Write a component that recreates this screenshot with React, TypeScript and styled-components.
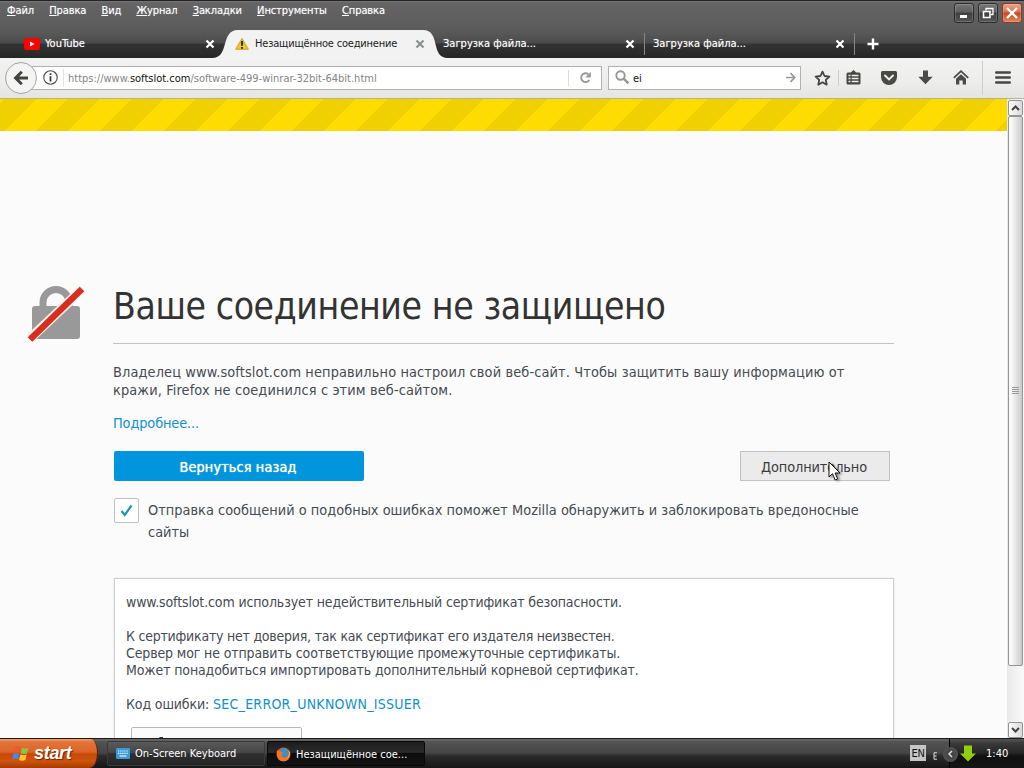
import styled, { createGlobalStyle } from 'styled-components';

const GlobalStyle = createGlobalStyle`
  * {
    box-sizing: border-box;
  }

  body {
    margin: 0;
    overflow: hidden;
    font-family: 'DejaVu Sans Condensed', 'DejaVu Sans', sans-serif;
    font-stretch: condensed;
  }

  svg {
    display: block;
    flex: none;
  }
`;

const Desktop = styled.div`
  position: relative;
  display: flex;
  flex-direction: column;
  width: 1024px;
  height: 768px;
  overflow: hidden;
  background: #fbfbfb;
`;

/* Title area */

const Chrome = styled.header`
  display: flex;
  flex-direction: column;
  height: 58px;
  flex: none;
  color: #fff;
  font-size: 11px;
  border-top: 1px solid #242225;
  background: linear-gradient(
    #777 0,
    #646464 2px,
    #5d5d5d 24px,
    #585858 32px,
    #4b4b4b 42px,
    #343434 43px,
    #262626 57px
  );
`;

const MenuRow = styled.div`
  display: flex;
  justify-content: space-between;
  height: 29px;
`;

const Menu = styled.nav`
  display: flex;
  gap: 15.2px;
  padding: 3px 0 0 7px;
`;

const MenuItem = styled.span`
  height: 14px;
  line-height: 14px;
  letter-spacing: -0.1px;
  text-shadow: 0 0 1px rgba(255, 255, 255, 0.5);

  &::first-letter {
    text-decoration: underline;
  }
`;

const WindowButtons = styled.div`
  display: flex;
  gap: 4px;
  padding: 2px 2px 0 0;
`;

const WindowButton = styled.button<{ $close?: boolean }>`
  display: flex;
  align-items: center;
  justify-content: center;
  width: 20px;
  height: 20px;
  padding: 0;
  border: 1px solid ${(p) => (p.$close ? '#8e3a22' : '#2c2c2c')};
  border-radius: 3px;
  background: ${(p) =>
    p.$close
      ? 'linear-gradient(#eda28a, #d9714e 45%, #c8481f 50%, #e08a5e)'
      : 'linear-gradient(#777, #5e5e5e 45%, #3f3f3f 50%, #565656)'};
  box-shadow: inset 0 0 0 1px rgba(255, 255, 255, 0.16);
`;

const TabStrip = styled.div`
  display: flex;
  height: 28px;
`;

const Tab = styled.div<{ $width: number; $left: number; $active?: boolean }>`
  position: relative;
  display: flex;
  align-items: center;
  width: ${(p) => p.$width}px;
  padding: 0 9px 0 ${(p) => p.$left}px;
  color: ${(p) => (p.$active ? '#1c1c1c' : '#fff')};
  text-shadow: ${(p) => (p.$active ? 'none' : '0 0 1px rgba(255,255,255,.5)')};
`;

const TabShape = styled.svg`
  position: absolute;
  left: -12px;
  top: 0;
`;

const TabTitle = styled.span<{ $spacing?: number }>`
  position: relative;
  flex: 1;
  line-height: 14px;
  white-space: nowrap;
  letter-spacing: ${(p) => p.$spacing ?? 0}px;
`;

const TabIcon = styled.span`
  position: relative;
  width: 16px;
  margin-right: 5px;
`;

const TabClose = styled.span`
  position: relative;
`;

const TabDivider = styled.i`
  width: 1px;
  height: 22px;
  margin-top: 3px;
  background: #868686;
`;

const NewTab = styled.div`
  display: flex;
  align-items: center;
  padding-left: 12px;
`;

/* Navigation toolbar */

const Toolbar = styled.div`
  display: flex;
  align-items: center;
  height: 41px;
  flex: none;
  padding: 0 0 1px 5px;
  border-bottom: 1px solid #b5b19a;
  background: linear-gradient(#f2f2f2, #ededec 60%, #e4e4e3);
`;

const BackButton = styled.button`
  position: relative;
  z-index: 1;
  display: flex;
  align-items: center;
  justify-content: center;
  width: 32px;
  height: 32px;
  padding: 0;
  border: 1px solid #a5a5a5;
  border-radius: 50%;
  background: #f4f4f4;
`;

const Field = styled.div<{ $width: number }>`
  display: flex;
  align-items: center;
  width: ${(p) => p.$width}px;
  height: 24px;
  border: 1px solid #b2b2b2;
  background: #fff;
  font-size: 11px;
`;

const AddressField = styled(Field)`
  margin: 0 6px 0 -6px;
  padding-left: 11px;
`;

const SearchField = styled(Field)`
  padding: 0 4px 0 6px;
  color: #111;
`;

const FieldDivider = styled.i`
  width: 1px;
  height: 18px;
  margin: 0 4px 0 5px;
  background: #e2e2e2;
`;

const Url = styled.span`
  flex: 1;
  padding-top: 2px;
  color: #858585;
  white-space: nowrap;

  b {
    color: #111;
    font-weight: normal;
  }
`;

const ReloadSlot = styled.div`
  display: flex;
  align-items: center;
  justify-content: center;
  width: 33px;
  height: 16px;
  border-left: 1px solid #dcdcdc;
`;

const Query = styled.span`
  flex: 1;
  padding: 2px 0 0 3px;
`;

const Tools = styled.div`
  display: flex;
  align-items: center;
  gap: 20.5px;
  padding-left: 12.5px;
`;

const ToolDivider = styled.i<{ $height: number; $pull: number }>`
  width: 1px;
  height: ${(p) => p.$height}px;
  margin: 0 -${(p) => p.$pull}px;
  background: #cdcdcd;
`;

/* Page */

const Viewport = styled.div`
  display: flex;
  flex: 1;
  min-height: 0;
`;

const Page = styled.main`
  flex: 1;
  height: 100%;
  overflow: hidden;
  background: #fbfbfb;
`;

const Stripes = styled.div`
  height: 32px;
  background: repeating-linear-gradient(
    135deg,
    #ffdc00 0,
    #ffdc00 2.83px,
    #f0d000 2.83px,
    #f0d000 25.46px,
    #ffdc00 25.46px,
    #ffdc00 45.25px
  );
`;

const ErrorLayout = styled.div`
  display: flex;
  padding: 153px 0 0 27px;
`;

const LockSlot = styled.div`
  width: 86px;
`;

const ErrorBody = styled.div`
  width: 781px;
  color: #464b52;
  font-size: 14.4px;
`;

const Title = styled.h1`
  height: 60px;
  margin: 0 0 19px;
  padding-top: 1px;
  border-bottom: 1px solid #c1c1c1;
  color: #333;
  font-size: 37px;
  font-weight: normal;
  line-height: 44px;
  letter-spacing: -0.4px;
  white-space: nowrap;
`;

const Text = styled.p`
  margin: 0 0 15px;
  line-height: 18px;
  letter-spacing: 0.13px;
  white-space: nowrap;
`;

const Link = styled.a`
  color: #0f91cf;
`;

const MoreLink = styled(Link)`
  display: block;
  line-height: 18px;
  letter-spacing: -0.12px;
`;

const Actions = styled.div`
  display: flex;
  justify-content: space-between;
  margin: 19px 4px 17px 1px;
`;

const PrimaryButton = styled.button`
  width: 250px;
  height: 30px;
  padding: 2px 2px 0 0;
  border: 0;
  border-radius: 2px;
  background: #0095dd;
  color: #fff;
  font: inherit;
  letter-spacing: 0.1px;
  text-shadow: 0 0 1px #fff;
`;

const SecondaryButton = styled.button`
  width: 150px;
  height: 30px;
  padding: 2px 2px 0 0;
  border: 1px solid #c1c1c1;
  background: #ebebeb;
  color: #3c3c3c;
  font: inherit;
  letter-spacing: -0.1px;
`;

const ReportRow = styled.label`
  display: flex;
  margin-left: 1px;
`;

const CheckBox = styled.span`
  display: flex;
  align-items: center;
  justify-content: center;
  width: 25px;
  height: 25px;
  margin-right: 9px;
  border: 1px solid #c1c1c1;
  border-radius: 2px;
  background: #fff;
`;

const ReportText = styled.span`
  padding-top: 1px;
  line-height: 22px;
  letter-spacing: 0.02px;
  white-space: nowrap;
`;

const Details = styled.section`
  height: 230px;
  margin: 35px 0 0 1px;
  padding: 15px 11px;
  border: 1px solid #cfcfcf;
  background: #fff;
  box-shadow: 0 0 2px rgba(0, 0, 0, 0.1);
  font-size: 14px;
  line-height: 17px;
  letter-spacing: -0.13px;
`;

const DetailsText = styled.p`
  margin: 0 0 17px;
  white-space: nowrap;
`;

const TightLine = styled.span`
  letter-spacing: -0.23px;
`;

const CodeLink = styled(Link)`
  letter-spacing: 0.27px;
`;

const ExceptionButton = styled.button`
  display: flex;
  width: 171px;
  height: 32px;
  margin: -3px 0 0 5px;
  padding: 9px 0 0 26px;
  border: 1px solid #b9b9b9;
  border-radius: 2px;
  background: #fbfbfb;
`;

/* Scroll bar */

const ScrollTrack = styled.div`
  display: flex;
  flex-direction: column;
  width: 17px;
  padding: 1px 0 0 1px;
  background: linear-gradient(90deg, #e9e9e9, #fafafa);
`;

const ScrollButton = styled.div`
  display: flex;
  align-items: center;
  justify-content: center;
  width: 15px;
  height: 16px;
  border: 1px solid #949494;
  border-radius: 2px;
  background: linear-gradient(90deg, #fbfbfb, #dadada);
`;

const ScrollThumb = styled.div`
  display: flex;
  align-items: center;
  justify-content: center;
  width: 15px;
  height: 550px;
  margin-bottom: auto;
  border: 1px solid #949494;
  border-radius: 2px;
  background: linear-gradient(90deg, #f8f8f8 20%, #e9e9e9 45%, #cbcbcb);
`;

/* Taskbar */

const Taskbar = styled.footer`
  display: flex;
  height: 30px;
  flex: none;
  border-top: 1px solid #1a1a1a;
  background: linear-gradient(#6c6c6c, #525252 3px, #454545 14px, #2b2b2b 17px, #161616);
  color: #fff;
  font-size: 11px;
`;

const StartButton = styled.div`
  display: flex;
  align-items: center;
  width: 98px;
  padding: 0 0 1px 11px;
  border-right: 1px solid #5b2307;
  border-radius: 0 7px 9px 0 / 0 14px 14px 0;
  background: linear-gradient(#f3a06c, #e4733a 3px, #dd6428 13px, #c64806 15px, #cf540c 22px, #a53a04);
  font: italic bold 18px/20px 'Liberation Sans', Arial, sans-serif;
  letter-spacing: -0.3px;
  text-shadow: 1px 1px 1px rgba(60, 20, 0, 0.7);
`;

const StartLabel = styled.span`
  padding-left: 4px;
`;

const TaskButton = styled.div<{ $active?: boolean }>`
  display: flex;
  align-items: center;
  gap: 5px;
  width: 158px;
  height: 25px;
  margin: 2px 0 0 ${(p) => (p.$active ? 2 : 9)}px;
  padding: ${(p) => (p.$active ? '2px 0 0 8px' : '0 0 0 8px')};
  border: 1px solid ${(p) => (p.$active ? '#090909' : '#3a3a3a')};
  border-radius: 2px;
  background: ${(p) =>
    p.$active
      ? 'linear-gradient(#1d1d1d, #2b2b2b 45%, #0c0c0c 50%, #131313)'
      : 'linear-gradient(#5a5a5a, #464646 45%, #2f2f2f 52%, #252525)'};
  white-space: nowrap;
`;

const Language = styled.div`
  width: 16px;
  height: 16px;
  margin: 6px 0 0 auto;
  background: #c6c6c6;
  color: #111;
  line-height: 17px;
  text-align: center;
  letter-spacing: -0.4px;
`;

const LanguageGrip = styled.div`
  display: flex;
  align-items: center;
  width: 23px;
  padding: 4px 0 0 7px;
`;

const Tray = styled.div`
  display: flex;
  align-items: center;
  width: 75px;
  padding-left: 10px;
  border-left: 1px solid #000;
  background: linear-gradient(#555, #3a3a3a 4px, #262626 14px, #101010 17px, #151515);
`;

const TrayToggle = styled.div`
  display: flex;
  align-items: center;
  justify-content: center;
  width: 15px;
  height: 15px;
  margin: 1px 2px 0 -17px;
  border-radius: 50%;
  background: radial-gradient(#3b3b3b, #5c5c5c);
`;

const Clock = styled.span`
  padding-left: 10px;
`;

const Pointer = styled.svg`
  position: absolute;
  left: 828px;
  top: 461px;
  filter: drop-shadow(2px 1px 1px rgba(0, 0, 0, 0.4));
`;

const CloseIcon = ({ color }: { color: string }) => (
  <svg width="10" height="10" viewBox="0 0 10 10">
    <path d="M1.5 1.5l7 7M8.5 1.5l-7 7" stroke={color} strokeWidth="2.2" />
  </svg>
);

const YoutubeIcon = () => (
  <svg width="16" height="12" viewBox="0 0 16 12">
    <rect width="16" height="12" rx="2.5" fill="#f00" />
    <path d="M6 3.4v5.2L10.6 6z" fill="#fff" />
  </svg>
);

const WarningIcon = () => (
  <svg width="16" height="14" viewBox="0 0 16 14">
    <path d="M8 1.8L14 12.2H2z" fill="#f2cb1d" stroke="#d8b23a" strokeWidth="1.6" strokeLinejoin="round" />
    <path d="M8 4v4.8M8 10v1.8" stroke="#222" strokeWidth="1.8" />
  </svg>
);

const BackIcon = () => (
  <svg width="16" height="16" viewBox="0 0 16 16" fill="none" stroke="#44443f" strokeWidth="3">
    <path d="M8.8 1.8L2.6 8l6.2 6.2M3 8h12" />
  </svg>
);

const InfoIcon = () => (
  <svg width="15" height="15" viewBox="0 0 15 15">
    <circle cx="7.5" cy="7.5" r="6.7" fill="none" stroke="#4c4c4c" strokeWidth="1.1" />
    <path d="M7.5 3.2v1.8M7.5 6.2v5.3" stroke="#333" strokeWidth="1.7" />
  </svg>
);

const ReloadIcon = () => (
  <svg width="13" height="13" viewBox="0 0 13 13">
    <path d="M9.3 3.2A4.4 4.4 0 1 0 10.3 9" fill="none" stroke="#989898" strokeWidth="1.9" />
    <path d="M11.8 0.8v5.6H6.4z" fill="#989898" />
  </svg>
);

const SearchIcon = () => (
  <svg width="15" height="15" viewBox="0 0 15 15" fill="none" stroke="#969696">
    <circle cx="5.5" cy="5.5" r="4.2" strokeWidth="1.9" />
    <path d="M8.7 8.7l4.7 4.7" strokeWidth="2.5" />
  </svg>
);

const GoIcon = () => (
  <svg width="10" height="11" viewBox="0 0 10 11" fill="none" stroke="#999" strokeWidth="1.7">
    <path d="M0 5.5h8.5M4.5 1.2l4.3 4.3-4.3 4.3" />
  </svg>
);

const StarIcon = () => (
  <svg width="17" height="16" viewBox="0 0 17 16">
    <path
      d="M8.5 1.6l2 4.4 4.9.6-3.6 3.3.9 4.8-4.2-2.4-4.2 2.4.9-4.8L1.6 6.6l4.9-.6z"
      fill="none"
      stroke="#444"
      strokeWidth="1.8"
      strokeLinejoin="round"
    />
  </svg>
);

const BookmarksIcon = () => (
  <svg width="15" height="15" viewBox="0 0 15 15">
    <path
      d="M2 2.5h2.7L7.5 0l2.8 2.5H13A1.500 1.500 0 0 1 14.500 4v9a1.500 1.500 0 0 1-1.500 1.500H2A1.500 1.500 0 0 1 .5 13V4A1.500 1.500 0 0 1 2 2.500z"
      fill="#474743"
    />
    <path d="M2.5 5.5h2M5.700 5.500h6.800M2.500 8.500h2M5.700 8.500h6.800M2.500 11.500h2M5.700 11.500h6.800" stroke="#eee" strokeWidth="1.4" />
  </svg>
);

const PocketIcon = () => (
  <svg width="16" height="14" viewBox="0 0 16 14">
    <path d="M1.5 0h13A1.5 1.5 0 0 1 16 1.5V6a8 8 0 0 1-16 0V1.5A1.5 1.5 0 0 1 1.5 0z" fill="#494945" />
    <path d="M4 4.5l4 3.9 4-3.9" fill="none" stroke="#eee" strokeWidth="2" strokeLinecap="round" />
  </svg>
);

const DownloadIcon = () => (
  <svg width="15" height="15" viewBox="0 0 15 15">
    <path d="M5 .5h5v6.3h4.7l-7.2 7.5L.3 6.8H5z" fill="#4b4b49" />
  </svg>
);

const HomeIcon = () => (
  <svg width="16" height="15" viewBox="0 0 16 15">
    <path d="M.8 7.8L8 1.2l7.2 6.6" fill="none" stroke="#4b4b49" strokeWidth="1.8" />
    <path d="M8 4.3l5 4.5v5.7H9.7v-4H6.3v4H3V8.8z" fill="#4b4b49" />
  </svg>
);

const BurgerIcon = () => (
  <svg width="16" height="13" viewBox="0 0 16 13">
    <path d="M1.3 1.5h13.4M1.3 6.5h13.4M1.3 11.5h13.4" stroke="#474743" strokeWidth="2.6" strokeLinecap="round" />
  </svg>
);

const LockIcon = () => (
  <svg width="58" height="58" viewBox="0 0 58 58">
    <path d="M16 25v-6.500a13 13 0 0 1 26 0V25" fill="none" stroke="#999" strokeWidth="7" />
    <rect x="5" y="22" width="48" height="33" rx="3" fill="#999" />
    <path d="M2 55.5L56 4.500" stroke="#fbf5ea" strokeWidth="9.5" />
    <path d="M3 55.500L55 5" stroke="#d92d21" strokeWidth="6.5" />
  </svg>
);

const FlagIcon = () => (
  <svg width="19" height="17" viewBox="0 0 19 17">
    <path d="M4 2.2q3-1.8 6 0L8.7 7.8q-3-1.5-6 .1z" fill="#ec5a28" />
    <path d="M11 2.7q3 1.5 6.5 0L16 8.3q-3 1.5-6.3 0z" fill="#8cc63e" />
    <path d="M2.4 9q3-1.7 6-.1L7 14.5q-3-1.6-6 0z" fill="#4b86e8" />
    <path d="M9.4 9.4q3 1.5 6.3 0l-1.4 5.5q-3.2 1.6-6.3 0z" fill="#fbc92c" />
  </svg>
);

const KeyboardIcon = () => (
  <svg width="14" height="11" viewBox="0 0 14 11">
    <rect width="14" height="11" rx="1" fill="#3a9ad9" />
    <path d="M2 3h10M2 5.3h10" stroke="#e6f5ff" strokeWidth="1.2" strokeDasharray="1.3 .8" />
    <path d="M3.5 8h7" stroke="#e6f5ff" strokeWidth="1.2" />
  </svg>
);

const FirefoxIcon = () => (
  <svg width="15" height="15" viewBox="0 0 15 15">
    <circle cx="7.5" cy="7.5" r="7" fill="#e2591c" />
    <circle cx="8.3" cy="5.8" r="4.7" fill="#3d8fc4" />
    <path
      d="M1.3 3C.2 7 1 14 7.5 14.2c5 0 7.5-5 6-9.4-.2 4-2.5 6.2-5 6-2.7-.2-3.5-2.2-2-3.8 1-1 .3-1.700-1-2.200C3.500 4.400 2.200 4 1.300 3z"
      fill="#f0752a"
    />
    <path d="M12.2 3.2c1.5 3 .8 6.8-2.2 8.8 3-.8 4.5-4.5 3.5-7.2z" fill="#fcc93a" />
  </svg>
);

const menuItems = ['Файл', 'Правка', 'Вид', 'Журнал', 'Закладки', 'Инструменты', 'Справка'];

const App = () => {
  return (
    <Desktop>
      <GlobalStyle />
      <Chrome>
        <MenuRow>
          <Menu>
            {menuItems.map((item) => (
              <MenuItem key={item}>{item}</MenuItem>
            ))}
          </Menu>
          <WindowButtons>
            <WindowButton>
              <svg width="12" height="12" viewBox="0 0 12 12">
                <path d="M2 9.5h7" stroke="#fff" strokeWidth="3" />
              </svg>
            </WindowButton>
            <WindowButton>
              <svg width="12" height="12" viewBox="0 0 12 12" fill="none" stroke="#fff">
                <path d="M4 3.5v-2h7v6H9" strokeWidth="1.3" />
                <path d="M1.5 4.5H8v6H1.5z" strokeWidth="1.6" />
              </svg>
            </WindowButton>
            <WindowButton $close>
              <svg width="14" height="14" viewBox="0 0 14 14">
                <path d="M2 2l10 10M12 2L2 12" stroke="#fff" strokeWidth="2.4" />
              </svg>
            </WindowButton>
          </WindowButtons>
        </MenuRow>
        <TabStrip>
          <Tab $width={224} $left={24}>
            <TabIcon>
              <YoutubeIcon />
            </TabIcon>
            <TabTitle>YouTube</TabTitle>
            <TabClose>
              <CloseIcon color="#fff" />
            </TabClose>
          </Tab>
          <Tab $width={210} $left={10} $active>
            <TabShape width="236" height="28" viewBox="0 0 236 28">
              <path d="M0 28C18 28 8 0 26 0H211C229 0 218 28 236 28z" fill="#f2f2f2" />
            </TabShape>
            <TabIcon>
              <WarningIcon />
            </TabIcon>
            <TabTitle $spacing={-0.2}>Незащищённое соединение</TabTitle>
            <TabClose>
              <CloseIcon color="#8b9192" />
            </TabClose>
          </Tab>
          <Tab $width={210} $left={9}>
            <TabTitle>Загрузка файла...</TabTitle>
            <TabClose>
              <CloseIcon color="#fff" />
            </TabClose>
          </Tab>
          <TabDivider />
          <Tab $width={209} $left={8}>
            <TabTitle>Загрузка файла...</TabTitle>
            <TabClose>
              <CloseIcon color="#fff" />
            </TabClose>
          </Tab>
          <TabDivider />
          <NewTab>
            <svg width="12" height="12" viewBox="0 0 12 12">
              <path d="M6 .5v11M.5 6h11" stroke="#fff" strokeWidth="2.4" />
            </svg>
          </NewTab>
        </TabStrip>
      </Chrome>

      <Toolbar>
        <BackButton>
          <BackIcon />
        </BackButton>
        <AddressField $width={571}>
          <InfoIcon />
          <FieldDivider />
          <Url>
            https://www.<b>softslot.com</b>/software-499-winrar-32bit-64bit.html
          </Url>
          <ReloadSlot>
            <ReloadIcon />
          </ReloadSlot>
        </AddressField>
        <SearchField $width={193}>
          <SearchIcon />
          <Query>ei</Query>
          <GoIcon />
        </SearchField>
        <Tools>
          <StarIcon />
          <ToolDivider $height={16} $pull={13.5} />
          <BookmarksIcon />
          <PocketIcon />
          <DownloadIcon />
          <HomeIcon />
          <ToolDivider $height={34} $pull={8} />
          <BurgerIcon />
        </Tools>
      </Toolbar>

      <Viewport>
        <Page>
          <Stripes />
          <ErrorLayout>
            <LockSlot>
              <LockIcon />
            </LockSlot>
            <ErrorBody>
              <Title>Ваше соединение не защищено</Title>
              <Text>
                Владелец www.softslot.com неправильно настроил свой веб-сайт. Чтобы защитить вашу информацию от
                <br />
                кражи, Firefox не соединился с этим веб-сайтом.
              </Text>
              <MoreLink>Подробнее...</MoreLink>
              <Actions>
                <PrimaryButton>Вернуться назад</PrimaryButton>
                <SecondaryButton>Дополнительно</SecondaryButton>
              </Actions>
              <ReportRow>
                <CheckBox>
                  <svg width="13" height="13" viewBox="0 0 13 13">
                    <path d="M1.5 7l3.3 4 6.7-9.5" fill="none" stroke="#1b93bd" strokeWidth="2.2" />
                  </svg>
                </CheckBox>
                <ReportText>
                  Отправка сообщений о подобных ошибках поможет Mozilla обнаружить и заблокировать вредоносные
                  <br />
                  сайты
                </ReportText>
              </ReportRow>
              <Details>
                <DetailsText>www.softslot.com использует недействительный сертификат безопасности.</DetailsText>
                <DetailsText>
                  <TightLine>К сертификату нет доверия, так как сертификат его издателя неизвестен.</TightLine>
                  <br />
                  Сервер мог не отправить соответствующие промежуточные сертификаты.
                  <br />
                  Может понадобиться импортировать дополнительный корневой сертификат.
                </DetailsText>
                <DetailsText>
                  Код ошибки: <CodeLink>SEC_ERROR_UNKNOWN_ISSUER</CodeLink>
                </DetailsText>
                <ExceptionButton>
                  <svg width="5" height="2" viewBox="0 0 5 2">
                    <path d="M0 2L2 .5h3" fill="none" stroke="#333" />
                  </svg>
                </ExceptionButton>
              </Details>
            </ErrorBody>
          </ErrorLayout>
        </Page>
        <ScrollTrack>
          <ScrollButton>
            <svg width="9" height="6" viewBox="0 0 9 6">
              <path d="M1 5l3.5-3.5L8 5" fill="none" stroke="#444" strokeWidth="2" />
            </svg>
          </ScrollButton>
          <ScrollThumb>
            <svg width="7" height="8" viewBox="0 0 7 8">
              <path d="M0 .5h7M0 2.5h7M0 4.5h7M0 6.5h7" stroke="#999" />
            </svg>
          </ScrollThumb>
          <ScrollButton>
            <svg width="9" height="6" viewBox="0 0 9 6">
              <path d="M1 1l3.5 3.5L8 1" fill="none" stroke="#444" strokeWidth="2" />
            </svg>
          </ScrollButton>
        </ScrollTrack>
      </Viewport>

      <Taskbar>
        <StartButton>
          <FlagIcon />
          <StartLabel>start</StartLabel>
        </StartButton>
        <TaskButton>
          <KeyboardIcon />
          On-Screen Keyboard
        </TaskButton>
        <TaskButton $active>
          <FirefoxIcon />
          Незащищённое сое...
        </TaskButton>
        <Language>EN</Language>
        <LanguageGrip>
          <svg width="4" height="8" viewBox="0 0 4 8">
            <path d="M4 .8H1v6.4h3M1 4h2.5" fill="none" stroke="#ddd" />
          </svg>
        </LanguageGrip>
        <Tray>
          <TrayToggle>
            <svg width="7" height="8" viewBox="0 0 7 8">
              <path d="M5 1L2 4l3 3" fill="none" stroke="#ddd" strokeWidth="1.5" />
            </svg>
          </TrayToggle>
          <svg width="16" height="17" viewBox="0 0 16 17">
            <path d="M4 .5h8v8h4l-8 8-8-8h4z" fill="#93cc0b" />
          </svg>
          <Clock>1:40</Clock>
        </Tray>
      </Taskbar>

      <Pointer width="14" height="21" viewBox="0 0 14 21">
        <path d="M1 1v15l3.5-3.3L7.1 19l2.6-1.1L7.1 12H12z" fill="#fff" stroke="#111" />
      </Pointer>
    </Desktop>
  );
};

export default App;
